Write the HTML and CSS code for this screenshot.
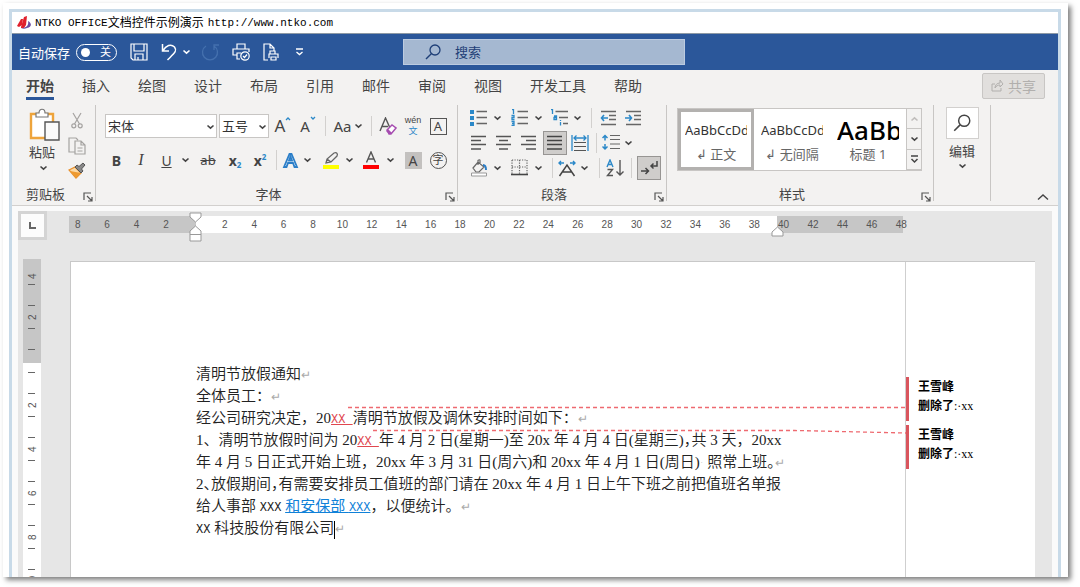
FILE: index.html
```html
<!doctype html>
<html lang="zh-CN">
<head>
    <meta charset="utf-8">
    <title>NTKO OFFICE文档控件示例演示</title>
    <link rel="stylesheet" href="styles.css">
</head>
<body>
<svg class="defs" aria-hidden="true">
    <symbol id="chev" viewBox="0 0 9 6"><path d="M1.5 1.5l3 2.6 3-2.6" fill="none" stroke="currentColor" stroke-width="1.6"/></symbol>
    <symbol id="launch" viewBox="0 0 10 10"><path d="M1 8V1h7M4 4l5 5M9 5v4H5" fill="none" stroke="#555" stroke-width="1.2"/></symbol>
    <symbol id="lens" viewBox="0 0 18 18"><circle cx="11" cy="7" r="5" fill="none" stroke="currentColor" stroke-width="1.3"/><path d="M7.3 10.7L2 16" stroke="currentColor" stroke-width="1.4"/></symbol>
</svg>
<div class="window">
    <div class="frame">
        <header class="titlebar">
            <svg width="14" height="13" viewBox="0 0 14 13"><path d="M0 10L4 3l2 0-1 6-3 2z" fill="#e0202c"/><path d="M4 11L7 1l3-1-1 9-2 3-3 0z" fill="#e0202c"/><path d="M11 5c4 2 4 6-1 7-2 1-4 1-6 0 5 0 8-2 7-7z" fill="#6b4fa3"/></svg>
            <span class="latin">NTKO OFFICE</span><span>文档控件示例演示</span><span class="latin url">http://www.ntko.com</span>
        </header>

        <div class="quickbar">
            <div class="quick">
                <label for="autosave">自动保存</label>
                <span class="switch"><input type="checkbox" id="autosave"><span>关</span></span>
                <button class="q-save" aria-label="保存"><svg width="18" height="18" viewBox="0 0 18 18"><path d="M1 1h16v16H3l-2-2zM4 1v7h10V1M5 17v-6h8v6M8 17v-3" fill="none" stroke="#fff" stroke-width="1.2"/></svg></button>
                <button class="q-undo" aria-label="撤消"><svg width="17" height="18" viewBox="0 0 17 18"><path d="M1.5 1v7H8M2 7.500c3-5 8-7 11.500-3.500 3 4 0 6-7 13" fill="none" stroke="#fff" stroke-width="1.5"/></svg></button>
                <button class="q-chev" aria-label="撤消列表"><svg width="9" height="6"><use href="#chev"/></svg></button>
                <button class="q-redo" aria-label="重复"><svg width="18" height="18" viewBox="0 0 18 18"><path d="M5 3a7.500 7.500 0 1 0 8 0M13 7V2h5" fill="none" stroke="#4470ae" stroke-width="1.3"/></svg></button>
                <button class="q-print" aria-label="打印预览"><svg width="18" height="18" viewBox="0 0 18 18" fill="none" stroke="#fff" stroke-width="1.2"><path d="M5 6V1h8v5M5 12H1V6h16v3M8 16H5v-6h4"/><circle cx="13" cy="13" r="4.200"/><path d="M11 13l1.500 1.500 2.500-3"/></svg></button>
                <button class="q-doc" aria-label="快速打印"><svg width="16" height="18" viewBox="0 0 16 18" fill="none" stroke="#fff" stroke-width="1.200"><path d="M5 17H1V1h6l4 4v3M7 1v4h4M7 11V8h5v3M6 15v-4h9v4M8 14h5v3H8z"/></svg></button>
                <button aria-label="自定义"><svg width="9" height="10" viewBox="0 0 9 10"><path d="M1 2h7M1.500 5l3 2.600 3-2.600" fill="none" stroke="#fff" stroke-width="1.300"/></svg></button>
            </div>
            <div class="search">
                <svg width="18" height="18"><use href="#lens"/></svg>
                <input type="text" aria-label="搜索" placeholder="搜索">
            </div>
        </div>

        <nav class="tabs">
            <a href="#" class="active">开始</a>
            <a href="#">插入</a>
            <a href="#">绘图</a>
            <a href="#">设计</a>
            <a href="#">布局</a>
            <a href="#">引用</a>
            <a href="#">邮件</a>
            <a href="#">审阅</a>
            <a href="#">视图</a>
            <a href="#">开发工具</a>
            <a href="#">帮助</a>
            <button class="share"><svg width="13" height="13" viewBox="0 0 13 13"><path d="M4 5H1v7h9V9M4 9c0-3 2-5 5-5V1l3 4-3 3V6C7 6 5 7 4 9z" fill="none" stroke="#b1afad"/></svg>共享</button>
        </nav>

        <div class="ribbon">
            <section class="group clipboard">
                <div class="clip-body">
                    <button class="paste">
                        <svg width="32" height="35" viewBox="0 0 32 35"><path d="M2 6h22v24H2z" fill="#fff" stroke="#eea43b" stroke-width="2.400"/><path d="M7 9V5h3c0-5 6-5 6 0h3v4z" fill="#fff" stroke="#777" stroke-width="1.200"/><path d="M16 14h14v18H16z" fill="#fafafa" stroke="#555" stroke-width="1.400"/></svg>
                        <span>粘贴</span>
                        <svg width="9" height="6"><use href="#chev"/></svg>
                    </button>
                    <div class="clip-tools">
                        <button aria-label="剪切"><svg width="12" height="17" viewBox="0 0 12 17" fill="none" stroke="#a5a3a1" stroke-width="1.200"><path d="M2 1l6.500 11M10 1L3.500 12"/><circle cx="2.800" cy="13.800" r="2"/><circle cx="9.200" cy="13.800" r="2"/></svg></button>
                        <button aria-label="复制"><svg width="18" height="18" viewBox="0 0 18 18" fill="none" stroke="#a5a3a1" stroke-width="1.200"><path d="M7 15H1V1h7l2 2M7 4h6l4 4v9H7zM13 4v4h4M9.500 11h5M9.500 14h5"/></svg></button>
                        <button aria-label="格式刷"><svg width="18" height="17" viewBox="0 0 18 17"><path d="M1 8l6-3 6 6-5 5z" fill="#fbd9a5" stroke="#e8912d" stroke-width="1.300"/><path d="M2 9l11 2-5 5z" fill="#ee9a30"/><path d="M7 5l2-2 2 1.500L15 1l2 2-3.500 4L15 9l-2 2z" fill="#888" stroke="#555"/></svg></button>
                    </div>
                </div>
                <footer>剪贴板<button class="launch" aria-label="剪贴板设置"><svg width="10" height="10"><use href="#launch"/></svg></button></footer>
            </section>

            <section class="group font">
                <div class="font-rows">
                    <div class="row font-a">
                        <span class="pick"><select aria-label="字体"><option>宋体</option></select><svg width="9" height="6"><use href="#chev"/></svg></span>
                        <span class="pick"><select aria-label="字号"><option>五号</option></select><svg width="9" height="6"><use href="#chev"/></svg></span>
                        <button class="grow" aria-label="增大字号">A<svg width="6" height="5" viewBox="0 0 6 5"><path d="M1 4l2-2 2 2" fill="none" stroke="#2b88c8" stroke-width="1.300"/></svg></button>
                        <button class="shrink" aria-label="减小字号">A<svg width="6" height="5" viewBox="0 0 6 5"><path d="M1 1l2 2 2-2" fill="none" stroke="#2b88c8" stroke-width="1.300"/></svg></button>
                        <i class="sep"></i>
                        <button class="case">Aa<svg width="9" height="6"><use href="#chev"/></svg></button>
                        <i class="sep"></i>
                        <button aria-label="清除格式"><svg width="18" height="19" viewBox="0 0 18 19"><path d="M1 14L6.500 1 11 11M3 9.500h6" fill="none" stroke="#555" stroke-width="1.400"/><path d="M8 13l5-5 4 3-5 6H10z" fill="#fff" stroke="#a64cb0" stroke-width="1.400"/><path d="M9 12l4 4-1 1h-2l-3-3z" fill="#a64cb0"/></svg></button>
                        <button class="pinyin"><span>wén</span><span class="wen">文</span></button>
                        <button class="boxed">A</button>
                    </div>
                    <div class="row font-b">
                        <button class="bold">B</button>
                        <button class="italic">I</button>
                        <button class="under">U</button>
                        <button class="drop" aria-label="下划线样式"><svg width="9" height="6"><use href="#chev"/></svg></button>
                        <button class="strike">ab</button>
                        <button class="script">x<sub>2</sub></button>
                        <button class="script">x<sup>2</sup></button>
                        <i class="sep"></i>
                        <button aria-label="文本效果"><svg width="17" height="17" viewBox="0 0 17 17"><path d="M2 15L7.500 2h2L15 15h-2.500L11 11H6l-1.500 4zM7 8.500h3L8.500 4.500z" fill="#fff" stroke="#2b7ec8" stroke-width="1.800"/></svg></button>
                        <button class="drop" aria-label="效果列表"><svg width="9" height="6"><use href="#chev"/></svg></button>
                        <button aria-label="突出显示"><svg width="18" height="18" viewBox="0 0 18 18"><path d="M4 12l1-4 7-6c3-1 4 1 3 3l-6 6zM5 8l4 3" fill="none" stroke="#666" stroke-width="1.300"/><path d="M1 14h16v4H1z" fill="#ff0"/></svg></button>
                        <button class="drop" aria-label="突出显示颜色"><svg width="9" height="6"><use href="#chev"/></svg></button>
                        <button aria-label="字体颜色"><svg width="18" height="18" viewBox="0 0 18 18"><path d="M4.500 11.500L9 1l4.500 10.500M6 8h6" fill="none" stroke="#555" stroke-width="1.400"/><path d="M1 14h16v4H1z" fill="#f00"/></svg></button>
                        <button class="drop" aria-label="颜色列表"><svg width="9" height="6"><use href="#chev"/></svg></button>
                        <button class="shade">A</button>
                        <button class="circled">字</button>
                    </div>
                </div>
                <footer>字体<button class="launch" aria-label="字体设置"><svg width="10" height="10"><use href="#launch"/></svg></button></footer>
            </section>

            <section class="group para">
                <div>
                    <div class="row para-a">
                        <button aria-label="项目符号"><svg width="17" height="17" viewBox="0 0 17 17"><path d="M0 1h4v4H0zM0 7h4v4H0zM0 13h4v4H0z" fill="#2b88c8"/><path d="M6.500 2.500H17M6.500 8.500H17M6.500 14.500H17" stroke="#666" stroke-width="1.300"/></svg></button>
                        <button class="drop" aria-label="符号列表"><svg width="9" height="6"><use href="#chev"/></svg></button>
                        <button aria-label="编号"><svg width="17" height="17" viewBox="0 0 17 17"><path d="M1 .5h1.500V5M.5 6.500h2.500V8.500H1v2h2.500M.5 12.500h2.500v4H.5M1 14.500h2" fill="none" stroke="#2b88c8" stroke-width="1.300"/><path d="M6.500 2.500H17M6.500 8.500H17M6.500 14.500H17" stroke="#666" stroke-width="1.300"/></svg></button>
                        <button class="drop" aria-label="编号列表"><svg width="9" height="6"><use href="#chev"/></svg></button>
                        <button aria-label="多级列表"><svg width="17" height="17" viewBox="0 0 17 17"><path d="M0 .5h1.500V5M3 7h2.500v3.500H3v-2h2M9.500 13v3.500M9.500 11v1" fill="none" stroke="#2b88c8" stroke-width="1.300"/><path d="M4.500 2.500H17M8 8.500h9M12 14.500h5" stroke="#666" stroke-width="1.300"/></svg></button>
                        <button class="drop" aria-label="多级样式"><svg width="9" height="6"><use href="#chev"/></svg></button>
                        <i class="sep"></i>
                        <button aria-label="减少缩进"><svg width="17" height="16" viewBox="0 0 17 16"><path d="M1 1.500h15M9 5.500h7M9 9.500h7M1 14.500h15" stroke="#666" stroke-width="1.300"/><path d="M8 8H2M4 5L1.500 8 4 11" fill="none" stroke="#2b88c8" stroke-width="1.600"/></svg></button>
                        <button aria-label="增加缩进"><svg width="17" height="16" viewBox="0 0 17 16"><path d="M1 1.500h15M9 5.500h7M9 9.500h7M1 14.500h15" stroke="#666" stroke-width="1.300"/><path d="M0 8h6M4 5l2.500 3L4 11" fill="none" stroke="#2b88c8" stroke-width="1.600"/></svg></button>
                    </div>
                    <div class="row para-b">
                        <button aria-label="左对齐"><svg width="16" height="16" viewBox="0 0 16 16"><path d="M0 1.500h15M0 5.500h10M0 9.500h15M0 14h10" stroke="#555" stroke-width="1.300"/></svg></button>
                        <button aria-label="居中"><svg width="16" height="16" viewBox="0 0 16 16"><path d="M0 1.500h15M3 5.500h9M0 9.500h15M3 14h9" stroke="#555" stroke-width="1.300"/></svg></button>
                        <button aria-label="右对齐"><svg width="16" height="16" viewBox="0 0 16 16"><path d="M0 1.500h15M5 5.500h10M0 9.500h15M5 14h10" stroke="#555" stroke-width="1.300"/></svg></button>
                        <button class="pressed" aria-label="两端对齐"><svg width="16" height="16" viewBox="0 0 16 16"><path d="M0 1.500h15M0 5.500h15M0 9.500h15M0 14h15" stroke="#444" stroke-width="1.400"/></svg></button>
                        <button aria-label="分散对齐"><svg width="18" height="18" viewBox="0 0 18 18"><path d="M1 1v16M17 1v16M3 4h12M5.500 1.500L3 4l2.500 2.500M12.500 1.500L15 4l-2.500 2.500" fill="none" stroke="#2b88c8" stroke-width="1.300"/><path d="M3 8.500h12M3 12.500h12M3 16.500h12" stroke="#555" stroke-width="1.200"/></svg></button>
                        <i class="sep"></i>
                        <button aria-label="行距"><svg width="18" height="17" viewBox="0 0 18 17"><path d="M3 1.500v5M3 10v5M.5 4L3 1.500 5.500 4M.5 12.500L3 15l2.500-2.500" fill="none" stroke="#2b88c8" stroke-width="1.500"/><path d="M8 1.500h10M8 5.500h10M8 10h10M8 14.500h10" stroke="#666" stroke-width="1.200"/></svg></button>
                        <button class="drop" aria-label="行距列表"><svg width="9" height="6"><use href="#chev"/></svg></button>
                    </div>
                    <div class="row para-c">
                        <button aria-label="底纹"><svg width="18" height="18" viewBox="0 0 18 18"><path d="M3 9l5-6 6 5-5 5H6zM8 6V1.500c1-1 2-1 2 0V5" fill="none" stroke="#666" stroke-width="1.200"/><path d="M13 6c3 0 3 3 3 5" fill="none" stroke="#2b7ec8" stroke-width="2"/><path d="M1.500 14h15v3h-15z" fill="#fff" stroke="#999"/></svg></button>
                        <button class="drop" aria-label="底纹颜色"><svg width="9" height="6"><use href="#chev"/></svg></button>
                        <button aria-label="边框"><svg width="17" height="17" viewBox="0 0 17 17"><path d="M1 1h15v14M1 1v14M8.500 1v14M1 8h15" fill="none" stroke="#666" stroke-width="1.200" stroke-dasharray="1.200 1.300"/><path d="M0 15.500h17" stroke="#444" stroke-width="1.600"/></svg></button>
                        <button class="drop" aria-label="边框列表"><svg width="9" height="6"><use href="#chev"/></svg></button>
                        <i class="sep"></i>
                        <button aria-label="中文版式"><svg width="18" height="18" viewBox="0 0 18 18"><path d="M1.500 17L9 6l7.500 11M4 13h10" fill="none" stroke="#444" stroke-width="1.500"/><path d="M1 4h5M3 2L1 4l2 2M17 4h-5M15 2l2 2-2 2" fill="none" stroke="#2b88c8" stroke-width="1.400"/></svg></button>
                        <button class="drop" aria-label="版式列表"><svg width="9" height="6"><use href="#chev"/></svg></button>
                        <i class="sep"></i>
                        <button aria-label="排序"><svg width="18" height="18" viewBox="0 0 18 18"><path d="M1 8l3-7 3 7M2 5.500h4" fill="none" stroke="#2b88c8" stroke-width="1.400"/><path d="M1.500 10.500h5l-5 6h5.500M14 1v15M10.500 12.500L14 16l3.500-3.500" fill="none" stroke="#555" stroke-width="1.400"/></svg></button>
                        <i class="sep"></i>
                        <button class="pressed" aria-label="显示标记"><svg width="18" height="16" viewBox="0 0 18 16"><path d="M17 1v5h-6M13.500 3.500L11 6l2.500 2.500M1 11h7M5.500 8L8.500 11l-3 3" fill="none" stroke="#444" stroke-width="1.500"/></svg></button>
                    </div>
                </div>
                <footer>段落<button class="launch" aria-label="段落设置"><svg width="10" height="10"><use href="#launch"/></svg></button></footer>
            </section>

            <section class="group styles">
                <div class="gallery">
                    <button class="style chosen"><span class="sample">AaBbCcDd</span><span>↲ 正文</span></button>
                    <button class="style"><span class="sample">AaBbCcDd</span><span>↲ 无间隔</span></button>
                    <button class="style"><span class="sample large">AaBb</span><span>标题 1</span></button>
                    <div class="scroll">
                        <button class="dim" aria-label="上一行"><svg class="flip" width="9" height="6"><use href="#chev"/></svg></button>
                        <button aria-label="下一行"><svg width="9" height="6"><use href="#chev"/></svg></button>
                        <button aria-label="其他"><svg width="9" height="9" viewBox="0 0 9 9"><path d="M1 1h7M1.500 4l3 3 3-3" fill="none" stroke="currentColor" stroke-width="1.500"/></svg></button>
                    </div>
                </div>
                <footer>样式<button class="launch" aria-label="样式设置"><svg width="10" height="10"><use href="#launch"/></svg></button></footer>
            </section>

            <section class="group edit">
                <button class="find"><span class="lens"><svg width="20" height="20"><use href="#lens"/></svg></span><span>编辑</span><svg width="9" height="6"><use href="#chev"/></svg></button>
            </section>
            <button class="collapse" aria-label="折叠功能区"><svg width="12" height="8" viewBox="0 0 12 8"><path d="M1 6.500L6 2l5 4.500" fill="none" stroke="#444" stroke-width="1.400"/></svg></button>
        </div>

        <main class="workspace">
            <div class="ruler-row">
                <button class="corner" aria-label="制表符"><svg width="7" height="7" viewBox="0 0 7 7"><path d="M1 0v6h6" fill="none" stroke="#666" stroke-width="2"/></svg></button>
                <div class="ruler">
                    <span>8</span><span>6</span><span>4</span><span>2</span><span></span><span>2</span><span>4</span><span>6</span><span>8</span><span>10</span><span>12</span><span>14</span><span>16</span><span>18</span><span>20</span><span>22</span><span>24</span><span>26</span><span>28</span><span>30</span><span>32</span><span>34</span><span>36</span><span>38</span><span>40</span><span>42</span><span>44</span><span>46</span><span>48</span>
                    <svg class="indent-left" width="13" height="31" viewBox="0 0 13 31"><path d="M1 1h11v4L6.500 10 1 5zM1 29V19l5.500-5 5.500 5v10zM1 22.500h11" fill="#fff" stroke="#999"/></svg>
                    <svg class="indent-right" width="13" height="11" viewBox="0 0 13 11"><path d="M1 10V6l5.500-5L12 6v4z" fill="#fff" stroke="#999"/></svg>
                </div>
            </div>
            <div class="canvas">
                <div class="v-ruler">
                    <span class="cut">4</span><span>2</span><span></span><span>2</span><span>4</span><span>6</span><span>8</span><span>10</span>
                </div>
                <article class="page">
                    <div class="text">
                        <p>清明节放假通知<i>↵</i></p>
                        <p>全体员工：<i>↵</i></p>
                        <p>经公司研究决定，20<ins>XX </ins>清明节放假及调休安排时间如下：<i>↵</i></p>
                        <p>1、清明节放假时间为 20<ins>XX </ins>年 4 月 2 日(星期一)至 20x 年 4 月 4 日(星期三)<span class="half">，</span>共 3 天，20xx</p>
                        <p>年 4 月 5 日正式开始上班，20xx 年 3 月 31 日(周六)和 20xx 年 4 月 1 日(周日)<i>·</i> 照常上班<span class="half">。</span><i>↵</i></p>
                        <p>2<span class="half">、</span>放假期间<span class="half">，</span>有需要安排员工值班的部门请在 20xx 年 4 月 1 日上午下班之前把值班名单报</p>
                        <p>给人事部 <b>XXX</b> <ins class="blue">和安保部 <b>XXX</b></ins>，以便统计。<i>↵</i></p>
                        <p><b>XX</b> 科技股份有限公司<span class="caret"></span><i>↵</i></p>
                    </div>
                    <aside class="notes">
                        <div class="note"><strong>王雪峰</strong><span><strong>删除了</strong>:·xx</span></div>
                        <div class="note"><strong>王雪峰</strong><span><strong>删除了</strong>:·xx</span></div>
                    </aside>
                    <svg class="links" width="835" height="180" viewBox="0 0 835 180"><path d="M277 145.500H835M302 168.500H724L835 171" fill="none" stroke="#ee6a70" stroke-width="1.300" stroke-dasharray="4 3"/></svg>
                </article>
            </div>
        </main>
    </div>
</div>
</body>
</html>
```
FILE: styles.css
```css
* {
    box-sizing: border-box;
}
body {
    margin: 0;
    height: 100vh;
    padding: 3px 12px 10px 3px;
    background: #fff;
    color: #444;
    font-family: "Noto Sans", "Noto Sans CJK SC", sans-serif;
    font-size: 13px;
    overflow: hidden;
}
button {
    display: flex;
    align-items: center;
    justify-content: center;
    padding: 0;
    border: none;
    background: none;
    color: inherit;
    font: inherit;
    cursor: pointer;
}
svg {
    flex: none;
}
.defs {
    display: none;
}
.window {
    height: 100%;
    padding: 6px 7px 0 6px;
    background: #fff;
    box-shadow: 3px 3px 5px rgba(0, 0, 0, 0.5);
}
.frame {
    display: flex;
    flex-direction: column;
    height: 100%;
    border: 3px solid #c8dae8;
    border-bottom: none;
    background: #fafafa;
    overflow: hidden;
}

/* title */
.titlebar {
    display: flex;
    align-items: center;
    flex: none;
    height: 22px;
    padding-left: 5px;
    background: #fff;
    border-bottom: 1px solid #8d99a5;
    color: #000;
    font-size: 12px;
    line-height: 20px;
}
.titlebar svg {
    margin-right: 4px;
}
.latin {
    font-family: "Liberation Mono", monospace;
    font-size: 11px;
}
.url {
    margin-left: 4px;
}

/* blue bar */
.quickbar {
    display: grid;
    grid-template-columns: 391px minmax(0, 282px) 1fr;
    align-items: center;
    flex: none;
    height: 36px;
    background: #2b579a;
    color: #fff;
}
.quick {
    display: flex;
    align-items: center;
    padding-left: 6px;
}
.switch {
    display: flex;
    align-items: center;
    justify-content: space-between;
    width: 41px;
    height: 17px;
    margin: 0 13px 0 6px;
    padding: 0 5px 0 4px;
    border: 1px solid #fff;
    border-radius: 9px;
    font-size: 11px;
    line-height: 14px;
}
.switch input {
    appearance: none;
    width: 9px;
    height: 9px;
    margin: 0;
    border-radius: 50%;
    background: #fff;
}
.q-save {
    margin-right: 13px;
}
.q-undo {
    margin-right: 4px;
}
.q-chev {
    margin-right: 10px;
}
.q-redo,
.q-print {
    margin-right: 13px;
}
.q-doc {
    margin-right: 16px;
}
.search {
    display: flex;
    align-items: center;
    height: 26px;
    padding-left: 20px;
    background: #a5b8d1;
    border: 1px solid #bccbe0;
    color: #1f3f77;
}
.search input {
    flex: 1;
    min-width: 0;
    margin-left: 13px;
    padding: 0;
    border: none;
    outline: none;
    background: none;
    font: inherit;
}
.search input::placeholder {
    color: #1f3f77;
}

/* tabs */
.tabs {
    display: flex;
    align-items: center;
    gap: 28px;
    flex: none;
    height: 31px;
    padding: 0 13px 0 14px;
    background: #f3f2f1;
}
.tabs a {
    height: 28px;
    color: #444;
    font-size: 14px;
    line-height: 28px;
    text-decoration: none;
}
.tabs .active {
    border-bottom: 3px solid #2b579a;
    font-weight: bold;
}
.share {
    gap: 4px;
    width: 63px;
    height: 26px;
    margin-left: auto;
    border: 1px solid #c8c6c4;
    border-radius: 2px;
    background: #e1dfdd;
    color: #b1afad;
    font-size: 14px;
}

/* ribbon */
.ribbon {
    display: flex;
    flex: none;
    padding: 4px 0;
    background: #f3f2f1;
    border-bottom: 1px solid #d2d0ce;
}
.group {
    display: flex;
    flex-direction: column;
    justify-content: space-between;
    height: 96px;
    border-right: 1px solid #c8c6c4;
}
.group footer {
    position: relative;
    height: 14px;
    line-height: 14px;
    text-align: center;
}
.launch {
    position: absolute;
    right: 2px;
    bottom: -1px;
}
.row {
    display: grid;
    align-items: center;
    justify-items: center;
}
.sep {
    width: 1px;
    height: 20px;
    background: #d2d0ce;
}
.drop {
    justify-self: start;
    height: 20px;
    padding-left: 2px;
}
.pressed {
    width: 24px;
    height: 24px;
    background: #cfcdcb;
    border: 1px solid #979593;
}

.clipboard {
    width: 84px;
}
.clipboard footer {
    padding-right: 16px;
}
.clip-body {
    display: flex;
    gap: 6px;
    padding: 3px 0 0 17px;
}
.paste {
    flex-direction: column;
    justify-content: flex-start;
    width: 32px;
    line-height: 18px;
}
.paste span {
    margin-right: 6px;
}
.paste svg:last-child {
    margin: 4px 4px 0 0;
}
.clip-tools {
    display: grid;
    grid-template-rows: 25px 25px 25px;
    justify-items: center;
    width: 20px;
}

.font {
    width: 362px;
}
.font footer {
    padding-right: 16px;
}
.font-rows {
    padding: 4px 0 0 9px;
}
.font .row {
    height: 34px;
}
.font-a {
    grid-template-columns: 114px 52px 24px 26px 8px 38px 8px 25px 26px 24px;
}
.font-b {
    grid-template-columns: 23px 26px 25px 15px 28px 26px 24px 8px 21px 18px 24px 15px 26px 18px 22px 28px;
    font-size: 14px;
}
.pick {
    position: relative;
    justify-self: stretch;
    margin-right: 2px;
}
.pick select {
    appearance: none;
    width: 100%;
    height: 24px;
    padding: 0 2px;
    border: 1px solid #c8c6c4;
    border-radius: 0;
    background: #fff;
    color: #333;
    font: inherit;
}
.pick svg {
    position: absolute;
    right: 2px;
    top: 10px;
}
.grow,
.shrink {
    align-items: flex-start;
    font-size: 17px;
    line-height: 20px;
}
.shrink {
    font-size: 15px;
}
.case {
    gap: 2px;
    font-size: 15px;
}
.pinyin {
    flex-direction: column;
    font-size: 9px;
    line-height: 8px;
}
.pinyin span:first-child {
    font-family: "Liberation Sans", sans-serif;
    line-height: 10px;
}
.wen {
    color: #2b88c8;
    line-height: 12px;
}
.boxed {
    width: 17px;
    height: 17px;
    border: 1px solid #555;
}
.bold {
    font-weight: bold;
}
.italic {
    font-family: "Liberation Serif", serif;
    font-style: italic;
    font-size: 16px;
}
.under {
    text-decoration: underline;
}
.strike {
    text-decoration: line-through;
    font-size: 13px;
}
.script {
    font-weight: bold;
}
.script sub,
.script sup {
    color: #2b88c8;
    font-size: 8px;
}
.script sub {
    padding-top: 8px;
}
.script sup {
    padding-bottom: 8px;
}
.shade {
    width: 17px;
    height: 17px;
    background: #c3c1bf;
}
.circled {
    width: 17px;
    height: 17px;
    border: 1px solid #555;
    border-radius: 50%;
    font-size: 11px;
    line-height: 14px;
}

.para {
    width: 209px;
}
.para .row {
    height: 25px;
    margin-left: 8px;
}
.para footer {
    padding-right: 16px;
}
.para-a {
    grid-template-columns: 25px 16px 25px 15px 24px 16px 8px 26px 24px;
}
.para-b {
    grid-template-columns: 25px 25px 25px 27px 24px 8px 22px 14px;
}
.para-c {
    grid-template-columns: 25px 16px 25px 16px 8px 22px 17px 8px 24px 8px 27px;
}

.styles {
    width: 267px;
}
.styles footer {
    padding-right: 16px;
}
.gallery {
    display: flex;
    height: 63px;
    margin: 3px 11px 0 10px;
    background: #fff;
    border: 1px solid #c8c6c4;
}
.style {
    flex: 1;
    flex-direction: column;
    width: 76px;
    padding: 0 4px;
    border: 3px solid transparent;
    color: #666;
}
.chosen {
    border-color: #b3b1af;
}
.style span {
    line-height: 19px;
}
.style .sample {
    width: 62px;
    height: 30px;
    overflow: hidden;
    color: #333;
    font-size: 13px;
    line-height: 30px;
    text-align: left;
    white-space: nowrap;
}
.style .large {
    color: #000;
    font-size: 26px;
    font-weight: 500;
}
.scroll {
    display: grid;
    grid-template-rows: 1fr 1fr 1fr;
    width: 15px;
}
.scroll button {
    border: 1px solid #c8c6c4;
    border-width: 0 0 1px 1px;
    background: #f3f2f1;
}
.scroll .dim {
    color: #c0bebc;
}
.flip {
    transform: rotate(180deg);
}

.edit {
    width: 57px;
}
.find {
    flex-direction: column;
    padding-top: 2px;
    line-height: 24px;
}
.find .lens {
    display: flex;
    align-items: center;
    justify-content: center;
    width: 33px;
    height: 32px;
    background: #fff;
    border: 1px solid #d2d0ce;
}
.collapse {
    align-self: flex-end;
    margin: 0 9px 0 auto;
}

/* document area */
.workspace {
    display: flex;
    flex-direction: column;
    flex: 1;
    margin: 5px 6px 0 6px;
    background: #e6e6e6;
}
.ruler-row {
    display: flex;
    height: 29px;
}
.corner {
    width: 29px;
    height: 29px;
    border: 3px solid #d4d4d4;
    background: #fcfcfc;
}
.ruler {
    position: relative;
    display: grid;
    grid-template-columns: repeat(29, 1fr);
    width: 853px;
    height: 17px;
    margin: 5px 0 0 16px;
    background: linear-gradient(90deg, transparent 6px, #c6c6c6 6px 133px, #fff 133px 714px, #c6c6c6 714px 840px, transparent 840px);
    color: #555;
    font-family: "Liberation Sans", sans-serif;
    font-size: 10px;
    line-height: 18px;
    text-align: center;
}
.indent-left {
    position: absolute;
    left: 126px;
    top: -4px;
}
.indent-right {
    position: absolute;
    left: 708px;
    top: 10px;
}
.canvas {
    display: grid;
    grid-template-columns: 18px 1fr;
    gap: 29px;
    flex: 1;
    margin: 19px 17px 0 5px;
}
.v-ruler {
    height: 0;
    min-height: 100%;
    overflow: hidden;
    background: linear-gradient(#c6c6c6 104px, #fff 104px);
    color: #555;
    font-family: "Liberation Sans", sans-serif;
    font-size: 10px;
}
.v-ruler span {
    display: flex;
    align-items: center;
    justify-content: space-between;
    width: 18px;
    height: 44px;
    padding: 10px 0;
    writing-mode: vertical-rl;
    transform: rotate(180deg);
}
.v-ruler span::before,
.v-ruler span::after {
    content: "";
    width: 7px;
    height: 1px;
    background: #666;
}
.v-ruler .cut {
    height: 36px;
    padding-bottom: 8px;
}
.v-ruler .cut::after {
    visibility: hidden;
}
.page {
    position: relative;
    display: grid;
    grid-template-columns: 835px 1fr;
    height: 0;
    min-height: calc(100% - 2px);
    margin-top: 2px;
    background: #fff;
    border: 1px solid #c8c8c8;
    border-width: 1px 0 0 1px;
}
.text {
    padding: 101px 0 0 125px;
    border-right: 1px solid #cfcfcf;
    color: #222;
    font-family: "Liberation Serif", "Noto Sans CJK SC", serif;
    font-size: 15px;
    font-weight: 350;
}
.text p {
    height: 22px;
    margin: 0;
    line-height: 22px;
    white-space: nowrap;
}
.text i {
    color: #aaa;
    font-family: "DejaVu Sans", sans-serif;
    font-size: 12px;
    font-style: normal;
}
.text b,
.text ins {
    font-family: "Liberation Mono", "Noto Sans CJK SC", monospace;
    font-size: 12px;
    font-weight: normal;
}
.text ins {
    color: #e0474f;
}
.text .blue {
    color: #1081d8;
    font-family: inherit;
    font-size: 15px;
}
/* half-width punctuation */
.half {
    font-feature-settings: "halt";
}
.caret {
    display: inline-block;
    width: 1px;
    height: 18px;
    background: #000;
    vertical-align: middle;
}
.notes {
    display: flex;
    flex-direction: column;
    gap: 4px;
    padding-top: 115px;
    color: #000;
    font-family: "Liberation Serif", "Noto Sans CJK SC", serif;
    font-size: 12px;
}
.note {
    display: flex;
    flex-direction: column;
    height: 44px;
    padding: 1px 0 0 9px;
    border-left: 3px solid #d9555d;
    line-height: 19px;
}
.links {
    position: absolute;
    left: 0;
    top: 0;
}
```
